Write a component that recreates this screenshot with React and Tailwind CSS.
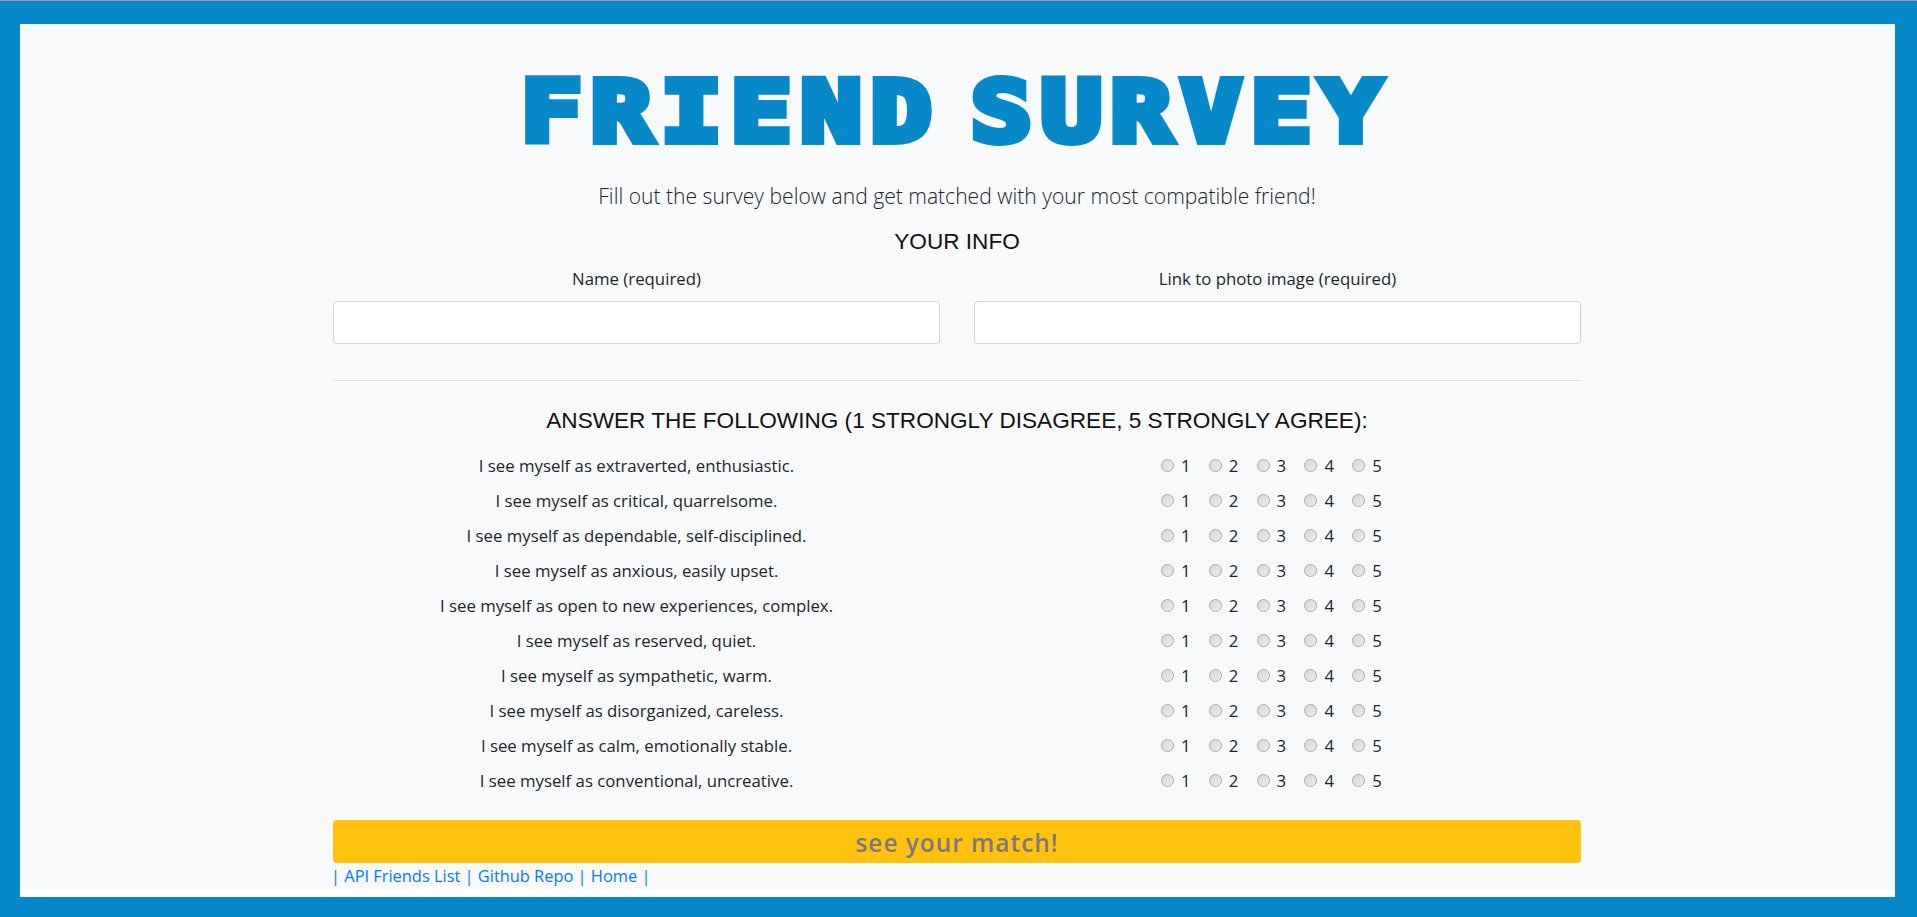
const questions = [
  'I see myself as extraverted, enthusiastic.',
  'I see myself as critical, quarrelsome.',
  'I see myself as dependable, self-disciplined.',
  'I see myself as anxious, easily upset.',
  'I see myself as open to new experiences, complex.',
  'I see myself as reserved, quiet.',
  'I see myself as sympathetic, warm.',
  'I see myself as disorganized, careless.',
  'I see myself as calm, emotionally stable.',
  'I see myself as conventional, uncreative.',
];

const Radio = ({ n }) => (
  <div className="flex w-[47.8px] items-center">
    <span className="h-[13px] w-[13px] rounded-full border border-[#a9a9a9] bg-gradient-to-br from-[#d6d6d6] to-[#eeeeee]" />
    <span className="ml-[7px] text-[16.8px] text-[#212529]">{n}</span>
  </div>
);

const App = () => {
  return (
    <div className="flex h-[917px] flex-col overflow-hidden bg-[#0788c8] font-['Open_Sans',sans-serif] text-[#212529]">
      <div className="h-px bg-[#a0a0a0]" />
      <div className="ml-[20px] mr-[22px] mt-[23px] mb-[20px] flex flex-1 flex-col bg-white">
        <div className="h-[865px] bg-[#f8f9fa]">
          <div className="ml-[313px] flex w-[1248px] flex-col">
            <h1 className="mt-[38px] scale-x-[1.2] pr-[2px] text-center font-['DejaVu_Sans_Mono',monospace] text-[84px] leading-[100px] font-bold tracking-[7.7px] [word-spacing:-33px] text-[#0788c8] [-webkit-text-stroke:8px_#0788c8]">
              FRIEND SURVEY
            </h1>
            <p className="mt-[19px] text-center text-[21.1px] leading-[30px] font-light">
              Fill out the survey below and get matched with your most compatible friend!
            </p>
            <h5 className="mt-[19px] text-center font-['Liberation_Sans',sans-serif] text-[22.6px] leading-[24px] text-[#111]">YOUR INFO</h5>
            <div className="mt-[13px] flex gap-[34px]">
              <div className="flex-1">
                <div className="text-center text-[16.8px] leading-[24px]">Name (required)</div>
                <input className="mt-[10px] h-[43px] w-full rounded border border-[#ced4da] bg-white" />
              </div>
              <div className="flex-1">
                <div className="text-center text-[16.8px] leading-[24px]">Link to photo image (required)</div>
                <input className="mt-[10px] h-[43px] w-full rounded border border-[#ced4da] bg-white" />
              </div>
            </div>
            <hr className="mt-[36px] border-[#dfe1e3]" />
            <h5 className="mt-[28px] text-center font-['Liberation_Sans',sans-serif] text-[22.6px] leading-[24px] text-[#111]">
              ANSWER THE FOLLOWING (1 STRONGLY DISAGREE, 5 STRONGLY AGREE):
            </h5>
            <div className="mt-[15px] flex flex-col">
              {questions.map((q) => (
                <div key={q} className="flex h-[35px] items-center">
                  <div className="w-[607px] text-center text-[16.8px]">{q}</div>
                  <div className="ml-[221px] flex">
                    {[1, 2, 3, 4, 5].map((n) => <Radio key={n} n={n} />)}
                  </div>
                </div>
              ))}
            </div>
            <button className="mt-[22px] h-[43px] w-full rounded bg-[#ffc20e] pt-[3px] text-[24.4px] font-semibold tracking-[1px] text-[#7a7a7a]">see your match!</button>
            <div className="mt-px -ml-[2px] text-[16.4px] leading-[24px] text-[#007bff]">| API Friends List | Github Repo | Home |</div>
          </div>
        </div>
      </div>
    </div>
  );
};

export default App;
